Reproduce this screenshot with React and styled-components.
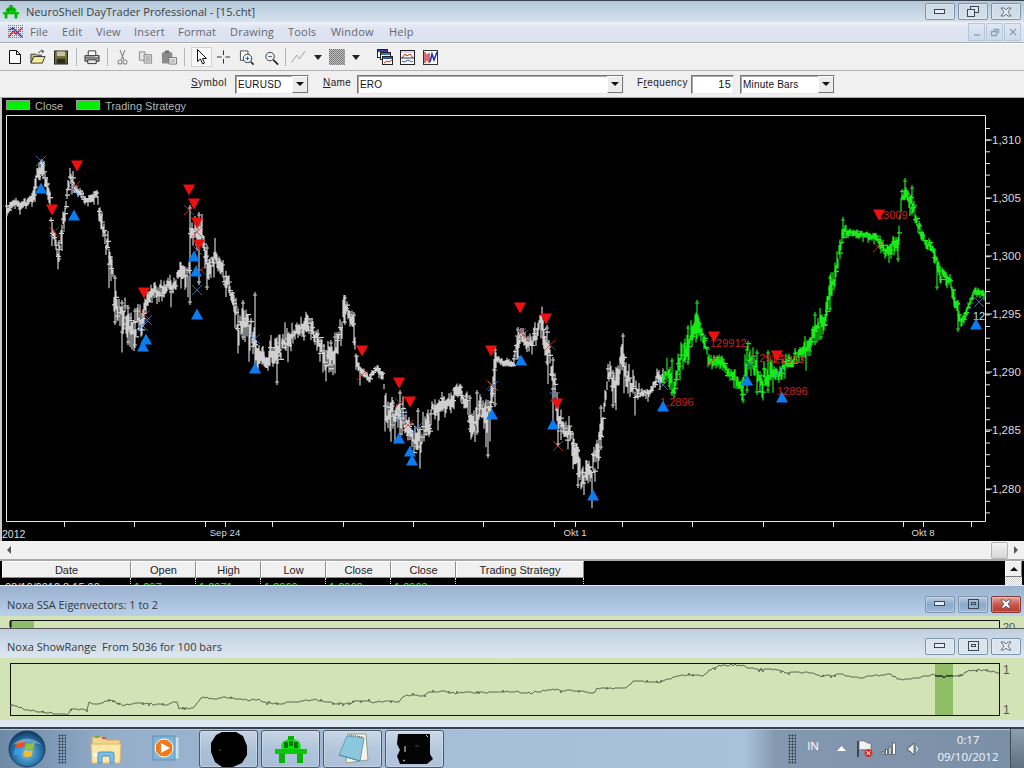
import React from 'react';
import styled, { createGlobalStyle } from 'styled-components';

const UI_FONT = '"Open Sans", "Noto Sans", sans-serif';
const APP_FONT = '"Liberation Sans", Arial, sans-serif';

const GlobalStyle = createGlobalStyle`
  html, body {
    margin: 0;
    padding: 0;
    background: #dfe8f1;
    overflow: hidden;
  }
`;

const Page = styled.div`
  width: 1024px;
  height: 768px;
  display: flex;
  flex-direction: column;
  overflow: hidden;
  font-family: ${APP_FONT};
`;

const TitleBar = styled.div`
  height: 21px;
  flex: none;
  display: flex;
  align-items: center;
  justify-content: space-between;
  padding: 0 3px 0 2px;
  border-top: 1px solid #3a4552;
  background: linear-gradient(to bottom, #b3c6d8, #d6e3ee);
`;
const AppName = styled.div`
  display: flex;
  align-items: center;
  gap: 6px;
  font: 11.1px ${UI_FONT};
  color: #3a3f45;
`;
const WinControls = styled.div`
  display: flex;
  gap: 3px;
`;
const WinButton = styled.div`
  width: 30px;
  height: 17px;
  display: flex;
  align-items: center;
  justify-content: center;
  box-sizing: border-box;
  border: 1px solid ${p => (p.$hot ? '#7d3a36' : '#7e92a8')};
  border-radius: 2px;
  background: ${p =>
    p.$hot
      ? 'linear-gradient(to bottom, #e5a79f, #c9594d 50%, #b8382c)'
      : p.$strong
        ? 'linear-gradient(to bottom, #b7cbe0, #8ba9cb 50%, #9db9d6)'
        : 'linear-gradient(to bottom, rgba(255,255,255,.3), rgba(255,255,255,.08))'};
  box-shadow: inset 0 0 0 1px rgba(255, 255, 255, 0.3);
`;

const MenuBar = styled.div`
  height: 19px;
  flex: none;
  display: flex;
  align-items: center;
  justify-content: space-between;
  padding: 0 3px 1px 8px;
  background: linear-gradient(to bottom, #eef1f8 0, #dfe4f2 30%, #dde2f0);
  border-bottom: 1px solid #a9adb3;
`;
const Menus = styled.div`
  display: flex;
  align-items: center;
  font: 11px ${UI_FONT};
  letter-spacing: 0.2px;
  color: #63676e;
`;
const MenuIconSlot = styled.div`
  width: 22px;
  flex: none;
  display: flex;
`;
const MenuItem = styled.span`
  width: ${p => p.$w}px;
  flex: none;
`;
const MdiButtons = styled.div`
  display: flex;
  gap: 1px;
`;
const MdiButton = styled.div`
  width: 17px;
  height: 18px;
  display: flex;
  align-items: center;
  justify-content: center;
  box-sizing: border-box;
  border: 1px solid #b5c7d8;
  background: linear-gradient(to bottom, #dfe8f2, #cbdbe9);
`;

const Toolbar = styled.div`
  height: 28px;
  flex: none;
  display: flex;
  align-items: center;
  padding-left: 8px;
  background: #f0f0f0;
  border-top: 1px solid #fff;
  border-bottom: 1px solid #b4b4b4;
  box-sizing: border-box;
`;
const ToolSlot = styled.div`
  width: ${p => p.$w}px;
  height: 20px;
  margin-left: ${p => p.$ml || 0}px;
  flex: none;
  display: flex;
  align-items: center;
  justify-content: center;
  box-sizing: border-box;
  ${p => p.$active && 'background: #f8f8f8; border: 1px solid #d2d2d2;'}
`;
const ToolSep = styled.div`
  width: 1px;
  height: 18px;
  margin-left: ${p => p.$ml}px;
  flex: none;
  background: #b8b8b8;
`;

const SymbolBar = styled.div`
  height: 26px;
  flex: none;
  display: flex;
  align-items: center;
  padding-left: 191px;
  box-sizing: border-box;
  background: #f0f0f0;
  font-size: 10px;
  letter-spacing: 0.4px;
  color: #222;
`;
const FieldLabel = styled.label`
  width: ${p => p.$w}px;
  margin-left: ${p => p.$ml || 0}px;
  flex: none;
  margin-top: -3px;
  u { text-underline-offset: 1px; }
`;
const Combo = styled.div`
  width: ${p => p.$w}px;
  height: 19px;
  margin-left: ${p => p.$ml || 0}px;
  flex: none;
  display: flex;
  box-sizing: border-box;
  align-items: center;
  justify-content: ${p => (p.$right ? 'flex-end' : 'space-between')};
  padding: ${p => (p.$right ? '0 2px 0 0' : '0 0 0 2px')};
  background: #fff;
  border: 1px solid;
  border-color: #777 #e8e8e8 #e8e8e8 #777;
  box-shadow: inset 1px 1px 0 #aaa;
  font-size: ${p => (p.$right ? 11 : 10)}px;
  letter-spacing: 0.2px;
  color: #111;
`;
const ComboArrow = styled.div`
  width: 16px;
  height: 17px;
  flex: none;
  display: flex;
  align-items: center;
  justify-content: center;
  box-sizing: border-box;
  background: #ececec;
  border: 1px solid;
  border-color: #fff #777 #777 #fff;
`;
const DownTriangle = styled.i`
  width: 0;
  height: 0;
  border-left: 4px solid transparent;
  border-right: 4px solid transparent;
  border-top: 4px solid #111;
`;

const ChartArea = styled.div`
  height: 444px;
  flex: none;
  display: flex;
  flex-direction: column;
  background: #000;
  border-left: 2px solid #c8c8c8;
  border-top: 1px solid #a8a8a8;
  box-sizing: border-box;
`;
const Legend = styled.div`
  height: 17px;
  flex: none;
  display: flex;
  align-items: flex-start;
  padding: 2px 0 0 4px;
  box-sizing: border-box;
  line-height: 13px;
  font-size: 11px;
  color: #b4b4b4;
`;
const Swatch = styled.i`
  width: 24px;
  height: 10px;
  flex: none;
  background: #00f000;
  border: 1px solid #9a9a9a;
  box-sizing: border-box;
  margin-left: ${p => p.$ml || 0}px;
  margin-right: 5px;
`;
const ChartSvg = styled.svg`
  display: block;
  flex: none;
  font-family: ${APP_FONT};
`;

const ScrollRow = styled.div`
  height: 18px;
  flex: none;
  display: flex;
  align-items: center;
  justify-content: space-between;
  padding: 0 6px 0 7px;
  background: #f1f1f1;
  border-bottom: 2px solid #a8a8a8;
`;
const ScrollArrow = styled.i`
  width: 0;
  height: 0;
  border-top: 4px solid transparent;
  border-bottom: 4px solid transparent;
  ${p => (p.$right ? 'border-left: 4px solid #555;' : 'border-right: 4px solid #555;')}
`;
const ScrollEnd = styled.div`
  display: flex;
  align-items: center;
  gap: 6px;
`;
const ScrollThumb = styled.div`
  width: 15px;
  height: 15px;
  border: 1px solid #b5b5b5;
  border-radius: 2px;
  background: linear-gradient(to bottom, #f2f2f2, #d6d6d6);
`;

const GridPanel = styled.div`
  height: 25px;
  flex: none;
  display: flex;
  justify-content: space-between;
  padding-left: 2px;
  background: #000;
  overflow: hidden;
  border-bottom: 1px solid #e8e8e8;
  box-sizing: border-box;
`;
const GridTable = styled.div`
  display: grid;
  grid-template-columns: 129px 65px 65px 65px 65px 65px 128px;
  grid-template-rows: 17px 8px;
  font-size: 11px;
`;
const HeaderCell = styled.div`
  display: flex;
  align-items: center;
  justify-content: center;
  box-sizing: border-box;
  background: #f0f0f0;
  color: #222;
  border: 1px solid;
  border-color: #fff #8d8d8d #8d8d8d #fff;
`;
const DataCell = styled.div`
  height: 5px;
  overflow: hidden;
  padding: 3px 0 0 3px;
  line-height: 13px;
  color: ${p => p.$color};
  border-right: 1px dotted #ddd;
`;
const GridScroll = styled.div`
  width: 17px;
  margin-right: 2px;
  flex: none;
  display: flex;
  flex-direction: column;
`;
const GridScrollButton = styled.div`
  height: 16px;
  display: flex;
  align-items: center;
  justify-content: center;
  box-sizing: border-box;
  background: #f0f0f0;
  border: 1px solid;
  border-color: #fff #777 #777 #fff;
`;
const UpTriangle = styled.i`
  width: 0;
  height: 0;
  border-left: 4px solid transparent;
  border-right: 4px solid transparent;
  border-bottom: 4px solid #111;
`;
const GridScrollTrack = styled.div`
  flex: 1;
  background: repeating-conic-gradient(#fff 0 25%, #ccc 0 50%) 0 0 / 2px 2px;
`;

const PaneTitle = styled.div`
  height: ${p => p.$h}px;
  flex: none;
  display: flex;
  align-items: center;
  justify-content: space-between;
  padding: ${p => p.$pad};
  box-sizing: border-box;
  background: ${p => p.$bg};
  font: 11px ${UI_FONT};
  white-space: pre;
  color: #33383e;
`;
const GreenPlot = styled.div`
  height: ${p => p.$h}px;
  flex: none;
  background: #d2e3b5;
  border-bottom: ${p => (p.$line ? '1px solid #555' : 'none')};
  box-sizing: border-box;
  overflow: hidden;
`;
const PlotSvg = styled.svg`
  display: block;
  font-family: ${APP_FONT};
`;
const FooterStrip = styled.div`
  height: 7px;
  flex: none;
  background: #dde8f2;
`;

const Taskbar = styled.div`
  flex: 1;
  display: flex;
  align-items: center;
  border-top: 2px solid #36424f;
  box-shadow: inset 0 1px 0 #b9cadb;
  background: linear-gradient(
    to right,
    #6d8aa7 0,
    #7d99b5 50px,
    #94aeca 110px,
    #a5bdd7 400px,
    #a9c1da 745px,
    #8499b0 775px,
    #7a8ea6 1024px
  );
`;
const TaskSlot = styled.div`
  width: ${p => p.$w}px;
  margin-left: ${p => p.$ml || 0}px;
  flex: none;
  display: flex;
  align-items: center;
  justify-content: center;
`;
const TaskGrip = styled.div`
  width: 8px;
  height: 30px;
  margin-left: ${p => p.$ml}px;
  flex: none;
  background: radial-gradient(circle, #2f3d4c 0 0.9px, transparent 1.1px) 0 0 / 3px 3px;
`;
const TaskButtons = styled.div`
  display: flex;
  gap: 3px;
  margin-left: 17px;
`;
const TaskButton = styled.div`
  width: 59px;
  height: 38px;
  display: flex;
  align-items: center;
  justify-content: center;
  box-sizing: border-box;
  border: 1px solid #49596b;
  border-radius: 3px;
  background: linear-gradient(to bottom, rgba(255,255,255,.42), rgba(255,255,255,.18) 50%, rgba(255,255,255,.1));
  box-shadow: inset 0 0 0 1px rgba(255, 255, 255, 0.28);
`;
const Tray = styled.div`
  margin-left: auto;
  display: flex;
  align-items: center;
  height: 100%;
  color: #fff;
  font: 11.5px ${UI_FONT};
`;
const TrayItem = styled.div`
  margin-left: ${p => p.$ml}px;
  margin-top: ${p => p.$mt || 0}px;
  flex: none;
  display: flex;
  align-items: center;
  justify-content: center;
`;
const Clock = styled.div`
  width: 62px;
  margin: -2px 0 0 17px;
  flex: none;
  text-align: center;
  line-height: 17px;
  font-size: 11.5px;
  color: #f4f7fa;
`;
const ShowDesktop = styled.div`
  width: 14px;
  height: 100%;
  margin-left: 11px;
  flex: none;
  box-sizing: border-box;
  border-left: 1px solid #3e4d5e;
  background: linear-gradient(to bottom, #8e9fb1, #5f7084);
`;

// ---- chart data, all in page pixels ----

const greyPath = [
  [7, 212], [13, 203], [23, 205], [33, 198], [37, 175], [42, 165], [47, 185], [50, 202], [52, 232], [58, 255],
  [63, 225], [70, 175], [75, 188], [87, 202], [97, 193], [100, 215], [107, 248], [112, 272], [115, 302], [125, 318],
  [133, 332], [143, 315], [150, 297], [163, 288], [173, 285], [182, 268], [188, 280], [190, 235], [197, 232], [202, 232],
  [207, 272], [215, 258], [227, 282], [233, 295], [238, 328], [248, 318], [257, 355], [267, 362], [283, 345], [308, 323],
  [317, 338], [325, 365], [333, 358], [345, 310], [353, 320], [357, 363], [363, 373], [370, 378], [377, 367], [383, 377],
  [387, 410], [400, 413], [410, 433], [417, 443], [427, 427], [433, 410], [450, 400], [460, 387], [468, 413], [472, 430],
  [480, 407], [487, 423], [493, 387], [495, 357], [503, 362], [513, 363], [518, 337], [533, 343], [540, 320], [548, 347],
  [553, 380], [558, 420], [570, 433], [578, 467], [582, 480], [590, 473], [598, 457], [603, 417], [608, 377], [617, 385],
  [622, 353], [630, 380], [638, 393], [650, 393], [658, 378], [663, 380],
];
const greenPath = [
  [663, 380], [667, 367], [672, 390], [680, 360], [690, 340], [697, 322], [703, 337], [708, 357], [720, 363], [733, 377],
  [743, 393], [747, 350], [757, 373], [762, 387], [767, 370], [778, 377], [787, 363], [797, 357], [810, 343], [815, 327],
  [825, 323], [832, 283], [838, 260], [843, 232], [850, 233], [867, 235], [877, 238], [885, 253], [898, 243], [902, 197],
  [905, 190], [912, 203], [917, 223], [923, 237], [933, 250], [940, 273], [950, 280], [955, 300], [962, 323], [970, 303],
  [975, 292], [984, 293],
];
const greySpikes = [
  [190, 205, 305], [199, 212, 285], [115, 275, 325], [135, 308, 348], [255, 292, 372], [59, 240, 262],
  [488, 413, 458], [495, 347, 407], [553, 357, 427], [623, 333, 367], [558, 400, 447], [578, 447, 488],
  [400, 390, 437], [518, 327, 360], [345, 295, 325], [601, 405, 450], [477, 390, 435], [122, 300, 335],
  [128, 305, 345], [207, 245, 290], [243, 300, 340], [277, 340, 385], [331, 340, 372], [354, 312, 345],
  [393, 400, 428], [418, 408, 450], [470, 395, 432], [547, 325, 365], [613, 370, 408],
];
const greenSpikes = [
  [697, 300, 327], [743, 377, 403], [747, 347, 393], [898, 237, 262], [905, 178, 200], [843, 217, 237],
  [672, 358, 396], [768, 350, 393], [757, 350, 395], [688, 325, 365], [815, 312, 345], [821, 315, 340],
  [830, 275, 312], [912, 185, 215], [958, 300, 332], [937, 258, 290],
];
const calmRanges = [[8, 32], [76, 98], [361, 384], [497, 516], [590, 600], [640, 656], [847, 878], [965, 984]];
const wildRanges = [[108, 145], [185, 215], [235, 260], [270, 292], [320, 345], [385, 430], [465, 495], [540, 560], [565, 600], [610, 635], [668, 700], [745, 772], [805, 840]];
const redDown = [
  [77, 166], [52, 210], [189, 190], [194, 204], [197, 223], [199, 245], [144, 293], [362, 351], [399, 383], [410, 402],
  [491, 351], [520, 308], [546, 319], [557, 404], [714, 337], [777, 356], [879, 215],
];
const blueUp = [
  [41, 188], [74, 215], [143, 346], [146, 339], [194, 256], [196, 271], [197, 314], [255, 368], [399, 438], [410, 451],
  [412, 460], [492, 414], [521, 360], [553, 424], [593, 495], [663, 406], [747, 380], [782, 397], [976, 324],
];
const crosses = [
  [41, 161, 'b'], [75, 186, 'r'], [54, 232, 'r'], [74, 190, 'b'], [189, 210, 'r'], [197, 232, 'r'], [197, 250, 'b'],
  [201, 270, 'r'], [197, 290, 'b'], [145, 315, 'r'], [147, 320, 'b'], [143, 326, 'b'], [255, 339, 'b'], [362, 375, 'r'],
  [400, 403, 'r'], [402, 415, 'b'], [408, 425, 'r'], [417, 428, 'b'], [491, 385, 'r'], [493, 386, 'b'], [521, 333, 'b'],
  [523, 335, 'r'], [550, 345, 'r'], [555, 397, 'b'], [558, 446, 'r'], [663, 385, 'b'], [713, 360, 'r'], [750, 363, 'b'],
  [779, 372, 'b'], [878, 247, 'r'], [979, 302, 'b'],
];
const redLabels = [
  ['1,2896', 660, 406],
  ['129912', 710, 347],
  ['1,2914', 750, 362],
  ['1,2913', 771, 363],
  ['12896', 777, 395],
  ['13009', 877, 219],
];
const xTicks = [64, 134, 205, 225, 272, 343, 413, 483, 554, 575, 622, 692, 763, 833, 903, 923, 971];
const yLabels = [['1,310', 140], ['1,305', 198], ['1,300', 256], ['1,295', 314], ['1,290', 372], ['1,285', 430], ['1,280', 489]];

const rangeLine = [
  [11, 705], [20, 708], [33, 711], [57, 714], [68, 714], [71, 709], [88, 710], [89, 703], [103, 703], [110, 700],
  [123, 705], [143, 703], [163, 705], [177, 702], [178, 709], [193, 708], [202, 697], [213, 699], [230, 697], [247, 700],
  [260, 700], [270, 703], [283, 704], [300, 701], [313, 700], [333, 703], [352, 704], [353, 701], [370, 702], [400, 701],
  [405, 695], [423, 696], [428, 692], [442, 691], [453, 693], [473, 692], [487, 693], [497, 691], [512, 692], [529, 693],
  [545, 690], [569, 690], [594, 693], [597, 689], [625, 688], [634, 681], [659, 682], [682, 675], [704, 676], [707, 672],
  [719, 665], [739, 665], [759, 670], [772, 669], [787, 673], [805, 672], [822, 676], [842, 674], [859, 678], [889, 674],
  [902, 680], [932, 675], [945, 676], [962, 675], [969, 671], [982, 670], [999, 673],
];

const makeRandom = seed => {
  let s = seed;
  return () => {
    s = (s + 0x6d2b79f5) | 0;
    let t = Math.imul(s ^ (s >>> 15), 1 | s);
    t = (t + Math.imul(t ^ (t >>> 7), 61 | t)) ^ t;
    return ((t ^ (t >>> 14)) >>> 0) / 4294967296;
  };
};

const yAt = (pts, x) => {
  for (let i = 1; i < pts.length; i++) {
    if (x <= pts[i][0]) {
      const [x0, y0] = pts[i - 1];
      const [x1, y1] = pts[i];
      return y0 + ((y1 - y0) * (x - x0)) / (x1 - x0 || 1);
    }
  }
  return pts[pts.length - 1][1];
};

const inRanges = (ranges, x) => ranges.some(([a, b]) => x >= a && x <= b);

const barsPath = (pts, spikes, seed, spread) => {
  const rnd = makeRandom(seed);
  let d = '';
  for (let x = pts[0][0]; x <= pts[pts.length - 1][0]; x++) {
    let vol = spread;
    if (inRanges(calmRanges, x)) vol = spread * 0.4;
    if (inRanges(wildRanges, x)) vol = spread * 1.7;
    const y = yAt(pts, x) + (rnd() - 0.5) * vol * 1.3;
    const up = 1.5 + rnd() * vol;
    const down = 1.5 + rnd() * vol * (rnd() < 0.12 ? 2.6 : 1);
    d += `M${x} ${(y - up).toFixed(1)}V${(y + down).toFixed(1)}`;
    if (rnd() < 0.6) d += `M${x - 2} ${(y + (rnd() - 0.5) * vol).toFixed(1)}H${x + 3}`;
  }
  spikes.forEach(([x, a, b]) => {
    d += `M${x} ${a}V${b}`;
    d += `M${x - 2} ${a + 3}H${x + 2}M${x - 2} ${b - 3}H${x + 2}`;
  });
  return d;
};

const minorTicks = () => {
  let d = '';
  for (let y = 128.5; y < 521; y += 11.65) d += `M985 ${y.toFixed(1)}H990`;
  return d;
};

const rangePoints = () => {
  const rnd = makeRandom(3);
  const out = [];
  for (let x = 11; x < 1000; x += 2) {
    const y = Math.round(yAt(rangeLine, x) + (rnd() - 0.5) * 1.8);
    out.push(`${x},${y}`);
    if (rnd() < 0.12) out.push(`${x},${y + (rnd() < 0.5 ? 2 : -2)}`, `${x},${y}`);
  }
  return out.join(' ');
};

const PriceChart = () => (
  <ChartSvg width="1022" height="426" viewBox="2 115 1022 426">
    <path d="M6.5 115.5H985.5V521.5H6.5Z" fill="none" stroke="#e8e8e8" />
    <path d={minorTicks()} stroke="#e8e8e8" />
    {yLabels.map(([t, y]) => (
      <g key={t}>
        <path d={`M985 ${y}H992`} stroke="#e8e8e8" />
        <text x="992" y={y + 4} fontSize="11.5" fill="#dcdcdc">{t}</text>
      </g>
    ))}
    {xTicks.map(x => (
      <path key={x} d={`M${x + 0.5} 521V527`} stroke="#e8e8e8" />
    ))}
    <text x="2" y="538" fontSize="10.5" fill="#dcdcdc">2012</text>
    <text x="225" y="536" fontSize="9.5" letterSpacing=".1" textAnchor="middle" fill="#dcdcdc">Sep 24</text>
    <text x="575" y="536" fontSize="9.5" letterSpacing=".1" textAnchor="middle" fill="#dcdcdc">Okt 1</text>
    <text x="923" y="536" fontSize="9.5" letterSpacing=".1" textAnchor="middle" fill="#dcdcdc">Okt 8</text>

    <path d={barsPath(greyPath, greySpikes, 7, 8)} stroke="#cfcfcf" strokeWidth="1.2" fill="none" />
    <path d={barsPath(greenPath, greenSpikes, 21, 6.5)} stroke="#18ec18" strokeWidth="1.2" fill="none" />

    {crosses.map(([x, y, c]) => (
      <path
        key={`${x}-${y}`}
        d={`M${x - 5} ${y - 5}L${x + 5} ${y + 5}M${x + 5} ${y - 5}L${x - 5} ${y + 5}`}
        stroke={c === 'r' ? '#d93030' : '#4a90e8'}
        strokeWidth=".7"
      />
    ))}
    {redLabels.map(([t, x, y]) => (
      <text key={t + x} x={x} y={y} fontSize="11" fill="#c92222">{t}</text>
    ))}
    <text x="973" y="320" fontSize="11" fill="#a9e6ff">12</text>
    {redDown.map(([x, y]) => (
      <polygon key={`${x}-${y}`} points={`${x - 6},${y - 5.5} ${x + 6},${y - 5.5} ${x},${y + 5.5}`} fill="#f00f0f" />
    ))}
    {blueUp.map(([x, y]) => (
      <polygon key={`${x}-${y}`} points={`${x - 6},${y + 5.5} ${x + 6},${y + 5.5} ${x},${y - 5.5}`} fill="#0b7df0" />
    ))}
  </ChartSvg>
);

const EigenPlot = () => (
  <PlotSvg width="1024" height="12" viewBox="0 616 1024 12">
    <rect x="11" y="621" width="23" height="8" fill="#8fbd68" />
    <path d="M10.5 630V620.5H999.5V630" fill="none" stroke="#111" />
    <path d="M10.5 621V627" stroke="#111" strokeWidth="2" />
    <text x="1003" y="631" fontSize="11" fill="#555">20</text>
  </PlotSvg>
);

const RangePlot = () => (
  <PlotSvg width="1024" height="62" viewBox="0 658 1024 62">
    <rect x="935" y="664" width="18" height="51" fill="#8ebd66" />
    <rect x="10.5" y="663.5" width="989" height="52" fill="none" stroke="#111" />
    <polyline points={rangePoints()} fill="none" stroke="#5c6650" strokeWidth="1" />
    <path d="M935 676L942 676L944 678L946 676L953 676" fill="none" stroke="#111" />
    <text x="1003" y="674" fontSize="12" fill="#555">1</text>
    <text x="1003" y="714" fontSize="12" fill="#555">1</text>
  </PlotSvg>
);

// ---- icons ----

const AppLogo = ({ size = 18 }) => (
  <svg width={size} height={size * 0.8} viewBox="0 0 20 16">
    <ellipse cx="10" cy="7" rx="6" ry="4" fill="#00d800" />
    <path d="M1 9h18v2.500H1z" fill="#00c000" />
    <path d="M3 11h3v5H3zM14 11h3v5h-3zM8 1h4v2H8z" fill="#00b400" />
    <path d="M6 5h2v3H6zM12 5h2v3h-2zM9 4h2v3H9z" fill="#007800" />
  </svg>
);
const MinGlyph = ({ c = '#3a4654' }) => (
  <svg width="12" height="6" viewBox="0 0 12 6"><rect x=".5" y=".5" width="10" height="4" fill="#e8eef4" stroke={c} /></svg>
);
const RestoreGlyph = () => (
  <svg width="12" height="11" viewBox="0 0 12 11" fill="#dce6ef" stroke="#3a4654">
    <rect x="3.500" y=".5" width="8" height="6" /><rect x=".5" y="3.500" width="7" height="7" />
  </svg>
);
const MaxGlyph = () => (
  <svg width="11" height="10" viewBox="0 0 11 10" fill="none" stroke="#3a4654">
    <rect x=".5" y=".5" width="10" height="9" /><rect x="3.500" y="3.500" width="4" height="2" />
  </svg>
);
const CloseGlyph = ({ c = '#3a4654', fill = '#e4ecf3' }) => (
  <svg width="12" height="10" viewBox="0 0 12 10">
    <path d="M1 1h3l2 2 2-2h3L8 5l3 4H8L6 7 4 9H1l3-4z" fill={fill} stroke={c} strokeWidth=".7" />
  </svg>
);
const SmallGlyph = ({ d }) => (
  <svg width="10" height="10" viewBox="0 0 10 10" fill="none" stroke="#8ca0b4" strokeWidth="1.400"><path d={d} /></svg>
);

const DocIcon = () => (
  <svg width="16" height="18" viewBox="0 0 16 18">
    <defs>
      <pattern id="dots" width="2" height="2" patternUnits="userSpaceOnUse"><rect width="1" height="1" fill="#777" /></pattern>
    </defs>
    <rect x="0" y="1" width="15" height="15" fill="url(#dots)" />
    <polyline points="1,14 5,8 8,11 14,5" fill="none" stroke="#d42020" strokeWidth="1.300" />
    <polyline points="1,7 5,5 9,9 14,14" fill="none" stroke="#2030a0" strokeWidth="1.200" />
  </svg>
);
const IconNew = () => (
  <svg width="14" height="16" viewBox="0 0 14 16"><path d="M1.500 1.500h7l4 4v9h-11z M8.500 1.500v4h4" fill="#fff" stroke="#111" /></svg>
);
const IconOpen = () => (
  <svg width="17" height="16" viewBox="0 0 17 16">
    <path d="M1 5h5l1 1h5v2H4l-3 6z" fill="#cfc778" stroke="#333" />
    <path d="M1 14.500l3-7h12l-3 7z" fill="#f3ea9a" stroke="#333" />
    <path d="M9 4c1-2 3-3 5-2M12 .5l2.500 1.500L13 4" fill="none" stroke="#333" />
  </svg>
);
const IconSave = () => (
  <svg width="15" height="15" viewBox="0 0 15 15">
    <rect x=".5" y=".5" width="14" height="14" fill="#6b6b3c" stroke="#222" />
    <rect x="3" y="1" width="9" height="5" fill="#c4c4a0" />
    <rect x="3" y="9" width="9" height="5" fill="#2c2c1c" />
  </svg>
);
const IconPrint = () => (
  <svg width="17" height="16" viewBox="0 0 17 16">
    <path d="M4.500 6V1.500h8V6" fill="#fff" stroke="#333" />
    <path d="M1 6.500h15v6H1z" fill="#a8a8a8" stroke="#333" />
    <path d="M1 9h15" stroke="#555" />
    <path d="M4 11h9v4H4z" fill="#e8e8e8" stroke="#333" />
    <path d="M12 7.500h2" stroke="#fff" />
  </svg>
);
const IconCut = () => (
  <svg width="11" height="16" viewBox="0 0 11 16" fill="none" stroke="#8a8a8a" strokeWidth="1.100">
    <path d="M3 1l4 10M8 1L4 11" /><circle cx="3" cy="13" r="2" /><circle cx="8" cy="13" r="2" />
  </svg>
);
const IconCopy = () => (
  <svg width="16" height="15" viewBox="0 0 16 15" stroke="#8a8a8a">
    <path d="M1.500 1.500h6v9h-6z" fill="#e4e4e4" /><path d="M6.500 4.500h8v9h-8z" fill="#d8d8d8" />
    <path d="M8 7h5M8 9h5M8 11h5" stroke="#999" />
  </svg>
);
const IconPaste = () => (
  <svg width="17" height="15" viewBox="0 0 17 15">
    <rect x="1" y="2" width="11" height="12" rx="1.500" fill="#8a8a8a" />
    <rect x="4" y="0" width="5" height="3" rx="1" fill="#6c6c6c" />
    <path d="M8.500 7.500h8v7h-8z" fill="#ececec" stroke="#777" />
    <path d="M10 10h5M10 12h5" stroke="#999" />
  </svg>
);
const IconArrow = () => (
  <svg width="12" height="18" viewBox="0 0 12 18"><path d="M1.500 1.500v12l3-2.500 2 5 2-1-2-4.500h4z" fill="#fff" stroke="#111" /></svg>
);
const IconCross = () => (
  <svg width="16" height="16" viewBox="0 0 16 16" stroke="#222"><path d="M8 1v5M8 10v5M1 8h5M10 8h5" /></svg>
);
const IconZoom = ({ plus }) => (
  <svg width="17" height="17" viewBox="0 0 17 17">
    {plus && <path d="M1.500 1.500h8v10h-8z" fill="#fff" stroke="#444" />}
    <circle cx={plus ? 9 : 7.500} cy={plus ? 9.500 : 7.500} r="4.500" fill="#eef6f4" stroke="#333" />
    <path d={plus ? 'M12.500 13l3 3' : 'M11 11l5 5'} stroke="#222" strokeWidth="1.800" />
    <path d={plus ? 'M7 9.500h4M9 7.500v4' : 'M5.500 7.500h4'} stroke="#2b5d8a" />
  </svg>
);
const IconLine = () => (
  <svg width="16" height="14" viewBox="0 0 16 14" fill="none" stroke="#9a9a9a"><path d="M.5 13L6 5l3 4 6-8" /></svg>
);
const Drop = () => (
  <svg width="8" height="5" viewBox="0 0 8 5"><path d="M0 0h8L4 5z" fill="#222" /></svg>
);
const IconHatch = () => (
  <svg width="16" height="16" viewBox="0 0 16 16">
    <defs>
      <pattern id="hatch" width="2" height="2" patternUnits="userSpaceOnUse">
        <rect width="2" height="2" fill="#c4c4c4" /><rect width="1" height="1" fill="#6e6e6e" /><rect x="1" y="1" width="1" height="1" fill="#7c7c7c" />
      </pattern>
    </defs>
    <rect width="16" height="16" fill="url(#hatch)" />
  </svg>
);
const IconWindows = () => (
  <svg width="16" height="16" viewBox="0 0 16 16">
    <rect x=".5" y=".5" width="10" height="8" fill="#fff" stroke="#222" /><rect x="1" y="1" width="9" height="2" fill="#3a3a9a" />
    <rect x="3.500" y="3.500" width="10" height="7" fill="#fff" stroke="#222" /><rect x="4" y="4" width="9" height="2" fill="#2a7ac0" />
    <rect x="5.500" y="7.500" width="10" height="8" fill="#fff" stroke="#222" /><rect x="6" y="8" width="9" height="2" fill="#2a5ac0" />
    <path d="M7 14l3-2 2 1 3-2" fill="none" stroke="#d02020" />
  </svg>
);
const IconWave = () => (
  <svg width="15" height="15" viewBox="0 0 15 15">
    <rect x=".5" y=".5" width="14" height="14" fill="#fff" stroke="#222" />
    <rect x="1" y="1" width="13" height="2" fill="#d8d8e8" />
    <path d="M2 8l3-4 2 2 3-2 3 4" fill="none" stroke="#d02020" />
    <path d="M1 8h13" stroke="#333" />
    <path d="M2 11q2 2 4 0t4 0 3 0" fill="none" stroke="#2050c0" />
  </svg>
);
const IconBars = () => (
  <svg width="15" height="15" viewBox="0 0 15 15">
    <rect x=".5" y=".5" width="14" height="14" fill="#fff" stroke="#333" />
    <path d="M2 2v11M4 4v7M6 3v10" stroke="#c02020" strokeWidth="1.300" />
    <path d="M7 12l2-8 2 6 3-8" fill="none" stroke="#1c2cb0" strokeWidth="1.500" />
  </svg>
);

const StartOrb = () => (
  <svg width="38" height="38" viewBox="0 0 38 38">
    <defs>
      <radialGradient id="orb" cx="50%" cy="60%" r="60%">
        <stop offset="0" stopColor="#7fc4ea" />
        <stop offset=".6" stopColor="#2b78ae" />
        <stop offset="1" stopColor="#0d3559" />
      </radialGradient>
    </defs>
    <circle cx="19" cy="19" r="18" fill="url(#orb)" stroke="#20405e" />
    <path d="M9 12q4-2 8 0l-1.500 6q-4-2-8 0z" fill="#e8502c" />
    <path d="M18.500 12.500q4 2 8.500 0l-1.500 6q-4 2-8.500 0z" fill="#8dc43c" />
    <path d="M7 19.500q4-2 8 0l-1.500 6q-4-2-8 0z" fill="#37a0e0" />
    <path d="M16.500 20q4 2 8.500 0l-1.500 6q-4 2-8.500 0z" fill="#f4bc2c" />
    <path d="M4 15Q19 2 34 15 19 9 4 15z" fill="#fff" opacity=".3" />
  </svg>
);
const FolderIcon = () => (
  <svg width="32" height="30" viewBox="0 0 32 30">
    <path d="M2 3h13l1 3h14v18H2z" fill="#f0d58a" stroke="#c8a860" />
    <rect x="5" y="2" width="4" height="2" fill="#6ab04c" /><rect x="12" y="3" width="4" height="2" fill="#d9534f" />
    <path d="M1 10h30l-1 19H2z" fill="#fbe7a8" stroke="#d8b870" />
    <path d="M8 29V20q0-2 2-2h12q2 0 2 2v9h-4v-7h-8v7z" fill="#7cc0e8" stroke="#4a90c0" />
    <path d="M4 19l4 2-4 2z" fill="#fff" />
  </svg>
);
const MediaIcon = () => (
  <svg width="30" height="28" viewBox="0 0 30 28">
    <rect x="7" y="2" width="20" height="22" fill="#cfe0ee" stroke="#8fb0cc" />
    <rect x="1" y="1" width="22" height="24" fill="#7fb3d8" stroke="#5e90b8" />
    <circle cx="12" cy="13" r="9" fill="#f07a1c" stroke="#fff" />
    <path d="M9 8l9 5-9 5z" fill="#fff" />
  </svg>
);
const ScribbleOne = () => (
  <svg width="36" height="36" viewBox="0 0 36 36">
    <path d="M11 1h14l7 4 4 10v9l-5 8-9 4H11l-7-5-4-10v-9l5-8z" fill="#000" />
    <circle cx="9" cy="19" r="1" fill="#2a4a2a" />
  </svg>
);
const TaskGreenLogo = () => (
  <svg width="34" height="30" viewBox="0 0 34 30">
    <ellipse cx="17" cy="12" rx="10" ry="7" fill="#10e010" />
    <path d="M1 15h32v5H1z" fill="#0cc40c" />
    <path d="M5 20h6v9H5zM23 20h6v9h-6zM14 2h6v4h-6z" fill="#08b008" />
    <path d="M10 8h4v6h-4zM20 8h4v6h-4zM15 7h4v5h-4z" fill="#067006" />
  </svg>
);
const NotepadIcon = () => (
  <svg width="32" height="32" viewBox="0 0 32 32">
    <path d="M11 1h18l2 26-22 3z" fill="#f4f2ea" stroke="#9a9a8a" />
    <path d="M10 3L27 5l-4 23-21-6z" fill="#8cc8dc" stroke="#6a9ab0" />
    <path d="M2 22l21 6" stroke="#4a8ca8" />
    <path d="M12 2l14 2" stroke="#444" strokeDasharray="1 1" />
  </svg>
);
const ScribbleTwo = () => (
  <svg width="36" height="33" viewBox="0 0 36 33">
    <path d="M1 2h32v20l3 5-6 5H3l-3-8 3-6-3-6z" fill="#040404" />
    <path d="M8 14v6M29 3l2 2M6 28l2 1" stroke="#d8e4ee" />
    <path d="M18 14h4" stroke="#445" />
  </svg>
);
const TrayArrow = () => (
  <svg width="9" height="5" viewBox="0 0 9 5"><path d="M4.500 0L9 5H0z" fill="#fff" /></svg>
);
const TrayFlag = () => (
  <svg width="16" height="18" viewBox="0 0 16 18">
    <path d="M1 1v16" stroke="#111" strokeWidth="1.200" />
    <path d="M2 1q5-1 7 1t5 1v8q-3 0-5-1t-7 0z" fill="#f2f2f2" stroke="#666" strokeWidth=".7" />
    <circle cx="11.500" cy="13" r="4" fill="#d52b2b" />
    <path d="M9.500 11l4 4M13.500 11l-4 4" stroke="#fff" />
  </svg>
);
const TraySignal = () => (
  <svg width="16" height="13" viewBox="0 0 16 13" fill="#fff" stroke="#333" strokeWidth=".6">
    <rect x="1" y="10" width="2" height="2.500" /><rect x="4.500" y="7.500" width="2" height="5" />
    <rect x="8" y="5" width="2" height="7.500" /><rect x="11.500" y="1" width="3" height="11.500" />
  </svg>
);
const TraySpeaker = () => (
  <svg width="13" height="14" viewBox="0 0 13 14">
    <path d="M1 5h2l4-4v12l-4-4H1z" fill="#f0f0f0" stroke="#444" strokeWidth=".7" />
    <path d="M9.500 4.500q2 2.500 0 5" fill="none" stroke="#fff" />
  </svg>
);

const menuEntries = [['File', 32], ['Edit', 34], ['View', 38], ['Insert', 44], ['Format', 52], ['Drawing', 58], ['Tools', 43], ['Window', 58], ['Help', 30]];
const columns = ['Date', 'Open', 'High', 'Low', 'Close', 'Close', 'Trading Strategy'];
const firstRow = [
  ['08/10/2012 8:15:00', '#dddddd'], ['1,297', '#3fe03f'], ['1,2971', '#3fe03f'], ['1,2960', '#3fe03f'],
  ['1,2963', '#3fe03f'], ['1,2963', '#3fe03f'], ['', '#ddd'],
];

const WindowButtons = ({ strong, hot }) => (
  <WinControls>
    <WinButton $strong={strong}><MinGlyph /></WinButton>
    <WinButton $strong={strong}><MaxGlyph /></WinButton>
    <WinButton $hot={hot}><CloseGlyph fill={hot ? '#fff' : '#e4ecf3'} /></WinButton>
  </WinControls>
);

const App = () => (
  <Page>
    <GlobalStyle />
    <TitleBar>
      <AppName>
        <AppLogo />
        NeuroShell DayTrader Professional - [15.cht]
      </AppName>
      <WinControls>
        <WinButton><MinGlyph /></WinButton>
        <WinButton><RestoreGlyph /></WinButton>
        <WinButton><CloseGlyph /></WinButton>
      </WinControls>
    </TitleBar>

    <MenuBar>
      <Menus>
        <MenuIconSlot><DocIcon /></MenuIconSlot>
        {menuEntries.map(([name, w]) => (
          <MenuItem key={name} $w={w}>{name}</MenuItem>
        ))}
      </Menus>
      <MdiButtons>
        <MdiButton><SmallGlyph d="M2 8h6" /></MdiButton>
        <MdiButton><SmallGlyph d="M3.500 2.500h5v4M1.500 4.500h5v4h-5z" /></MdiButton>
        <MdiButton><SmallGlyph d="M2 2l6 6M8 2L2 8" /></MdiButton>
      </MdiButtons>
    </MenuBar>

    <Toolbar>
      <ToolSlot $w={14}><IconNew /></ToolSlot>
      <ToolSlot $w={16} $ml={8}><IconOpen /></ToolSlot>
      <ToolSlot $w={14} $ml={8}><IconSave /></ToolSlot>
      <ToolSep $ml={8} />
      <ToolSlot $w={16} $ml={7}><IconPrint /></ToolSlot>
      <ToolSep $ml={7} />
      <ToolSlot $w={11} $ml={9}><IconCut /></ToolSlot>
      <ToolSlot $w={15} $ml={10}><IconCopy /></ToolSlot>
      <ToolSlot $w={16} $ml={8}><IconPaste /></ToolSlot>
      <ToolSep $ml={7} />
      <ToolSlot $w={21} $ml={6} $active><IconArrow /></ToolSlot>
      <ToolSlot $w={15} $ml={4}><IconCross /></ToolSlot>
      <ToolSlot $w={16} $ml={8}><IconZoom plus /></ToolSlot>
      <ToolSlot $w={16} $ml={8}><IconZoom /></ToolSlot>
      <ToolSep $ml={6} />
      <ToolSlot $w={15} $ml={5}><IconLine /></ToolSlot>
      <ToolSlot $w={8} $ml={8}><Drop /></ToolSlot>
      <ToolSlot $w={16} $ml={7}><IconHatch /></ToolSlot>
      <ToolSlot $w={8} $ml={7}><Drop /></ToolSlot>
      <ToolSlot $w={16} $ml={17}><IconWindows /></ToolSlot>
      <ToolSlot $w={15} $ml={7}><IconWave /></ToolSlot>
      <ToolSlot $w={15} $ml={8}><IconBars /></ToolSlot>
    </Toolbar>

    <SymbolBar>
      <FieldLabel $w={44}><u>S</u>ymbol</FieldLabel>
      <Combo $w={74}>EURUSD<ComboArrow><DownTriangle /></ComboArrow></Combo>
      <FieldLabel $w={34} $ml={14}><u>N</u>ame</FieldLabel>
      <Combo $w={267}>ERO<ComboArrow><DownTriangle /></ComboArrow></Combo>
      <FieldLabel $w={54} $ml={13}>F<u>r</u>equency</FieldLabel>
      <Combo $w={43} $right>15</Combo>
      <Combo $w={95} $ml={6}>Minute Bars<ComboArrow><DownTriangle /></ComboArrow></Combo>
    </SymbolBar>

    <ChartArea>
      <Legend>
        <Swatch />Close
        <Swatch $ml={13} />Trading Strategy
      </Legend>
      <PriceChart />
    </ChartArea>

    <ScrollRow>
      <ScrollArrow />
      <ScrollEnd>
        <ScrollThumb />
        <ScrollArrow $right />
      </ScrollEnd>
    </ScrollRow>

    <GridPanel>
      <GridTable>
        {columns.map((c, i) => (
          <HeaderCell key={`${c}${i}`}>{c}</HeaderCell>
        ))}
        {firstRow.map(([v, color], i) => (
          <DataCell key={`${v}${i}`} $color={color}>{v}</DataCell>
        ))}
      </GridTable>
      <GridScroll>
        <GridScrollButton><UpTriangle /></GridScrollButton>
        <GridScrollTrack />
      </GridScroll>
    </GridPanel>

    <PaneTitle $h={30} $pad="6px 3px 0 7px" $bg="linear-gradient(to bottom, #9ab2cf, #b8d0e8)">
      Noxa SSA Eigenvectors: 1 to 2
      <WindowButtons strong hot />
    </PaneTitle>
    <GreenPlot $h={13} $line><EigenPlot /></GreenPlot>

    <PaneTitle $h={29} $pad="5px 3px 0 7px" $bg="linear-gradient(to bottom, #c0d0e0, #dde7f0)">
      {'Noxa ShowRange  From 5036 for 100 bars'}
      <WindowButtons />
    </PaneTitle>
    <GreenPlot $h={62}><RangePlot /></GreenPlot>
    <FooterStrip />

    <Taskbar>
      <TaskSlot $w={38} $ml={8}><StartOrb /></TaskSlot>
      <TaskGrip $ml={12} />
      <TaskSlot $w={32} $ml={24}><FolderIcon /></TaskSlot>
      <TaskSlot $w={30} $ml={30}><MediaIcon /></TaskSlot>
      <TaskButtons>
        <TaskButton><ScribbleOne /></TaskButton>
        <TaskButton><TaskGreenLogo /></TaskButton>
        <TaskButton><NotepadIcon /></TaskButton>
        <TaskButton><ScribbleTwo /></TaskButton>
      </TaskButtons>
      <Tray>
        <TaskGrip $ml={0} />
        <TrayItem $ml={11} $mt={-6}>IN</TrayItem>
        <TrayItem $ml={18}><TrayArrow /></TrayItem>
        <TrayItem $ml={11}><TrayFlag /></TrayItem>
        <TrayItem $ml={8}><TraySignal /></TrayItem>
        <TrayItem $ml={10}><TraySpeaker /></TrayItem>
        <Clock>0:17<br />09/10/2012</Clock>
        <ShowDesktop />
      </Tray>
    </Taskbar>
  </Page>
);

export default App;
